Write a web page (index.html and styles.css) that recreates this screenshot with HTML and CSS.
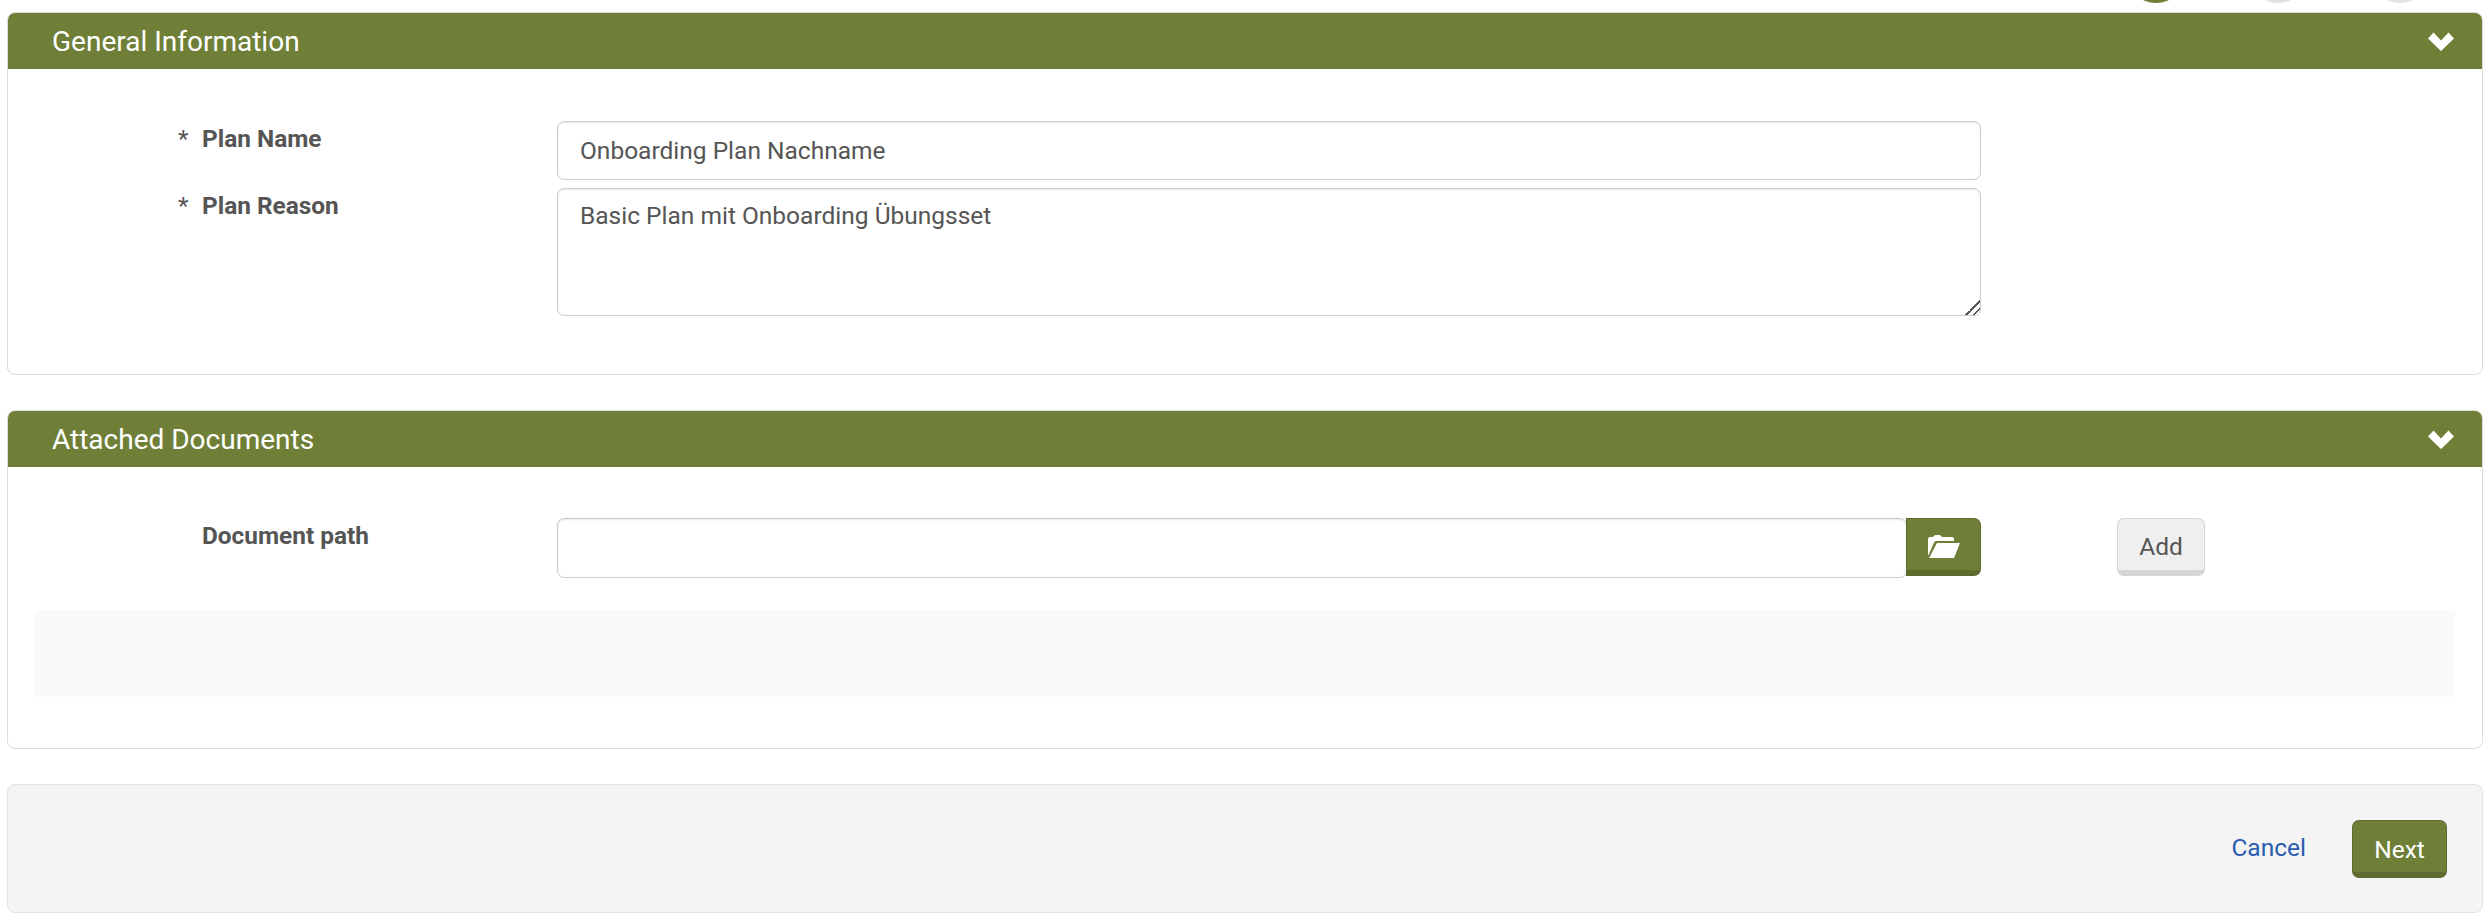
FILE: index.html
```html
<!DOCTYPE html>
<html lang="en">
<head>
  <meta charset="UTF-8" />
  <title>Onboarding Plan</title>
  <link rel="stylesheet" href="styles.css">
</head>
<body>
  <div class="steps">
    <span class="step step-active"></span>
    <span class="step"></span>
    <span class="step"></span>
  </div>

  <section class="panel panel-general">
    <header class="panel-head">
      <h2>General Information</h2>
      <svg class="chevron" viewBox="0 0 26 19"><path d="M0 6.500 L5.500 0.500 L13 8.500 L20.500 0.500 L26 6.500 L13 19 Z" /></svg>
    </header>
    <div class="panel-body">
      <div class="row row-name">
        <label class="row-label"><span class="req">*</span>Plan Name</label>
        <input class="field field-name" type="text" value="Onboarding Plan Nachname" />
      </div>
      <div class="row">
        <label class="row-label"><span class="req">*</span>Plan Reason</label>
        <textarea class="field field-area">Basic Plan mit Onboarding Übungsset</textarea>
      </div>
    </div>
  </section>

  <section class="panel panel-docs">
    <header class="panel-head">
      <h2>Attached Documents</h2>
      <svg class="chevron" viewBox="0 0 26 19"><path d="M0 6.500 L5.500 0.500 L13 8.500 L20.500 0.500 L26 6.500 L13 19 Z" /></svg>
    </header>
    <div class="panel-body">
      <div class="row">
        <label class="row-label"><span class="req"></span>Document path</label>
        <div class="file-group">
          <input class="field file-input" type="text" />
          <button class="btn btn-primary btn-browse" type="button">
            <svg class="folder" viewBox="0 0 32 23"><path d="M0 20 V4 Q0 2 2 2 H5 L7 0 H12 L14 2 H24 Q26 2 26 4 V6 H8 Q6.500 6 5.800 8 L0.500 20 Z" /><path d="M9 8 H32 L26 23 H1 Z" /></svg>
          </button>
        </div>
        <button class="btn btn-add" type="button">Add</button>
      </div>
      <div class="doc-list"></div>
    </div>
  </section>

  <footer class="actions">
    <a class="cancel" href="#">Cancel</a>
    <button class="btn btn-primary btn-next" type="button">Next</button>
  </footer>
</body>
</html>
```

FILE: styles.css
```css
* {
  box-sizing: border-box;
}
body {
  margin: 0;
  padding: 0 9px 0 7px;
  background-color: white;
  font-family: Roboto, sans-serif;
  font-size: 24.4px;
  color: #555555;
  height: 923px;
  overflow: hidden;
}
.steps {
  height: 12px;
  display: flex;
  justify-content: flex-end;
  gap: 62px;
  padding-right: 53px;
  overflow: hidden;
}
.step {
  flex: none;
  width: 60px;
  height: 60px;
  margin-top: -57px;
  border-radius: 50%;
  background-color: #e2e2e2;
}
.step-active {
  background-color: #6f7f37;
}
.panel {
  border: 1px solid #dcdcdc;
  border-radius: 8px;
  background-color: white;
}
.panel-general {
  height: 363px;
}
.panel-docs {
  height: 339px;
  margin-top: 35px;
}
.panel-head {
  height: 56px;
  background-color: #6f7f37;
  color: white;
  border-radius: 7px 7px 0 0;
  padding: 0 28px 0 44px;
  display: flex;
  align-items: center;
  justify-content: space-between;
}
.panel-head h2 {
  margin: 0;
  font-size: 28px;
  font-weight: 400;
}
.chevron {
  width: 26px;
  height: 19px;
  fill: white;
}
.panel-body {
  padding: 52px 27px 0 27px;
}
.panel-docs .panel-body {
  padding-top: 51px;
}
.row {
  display: flex;
  align-items: flex-start;
}
.row-name {
  margin-bottom: 8px;
}
.row-label {
  flex: none;
  width: 523px;
  padding-left: 143px;
  padding-top: 3px;
  font-weight: 700;
  display: flex;
}
.req {
  width: 24px;
  font-weight: 400;
}
.field {
  display: block;
  width: 1424px;
  height: 60px;
  margin-left: -1px;
  border: 1px solid #cccccc;
  border-radius: 7px;
  padding: 0 22px;
  font-family: Roboto, sans-serif;
  font-size: 24.5px;
  color: #555555;
  box-shadow: inset 0 1px 2px rgba(0,0,0,0.1);
  outline: none;
}
.field-name {
  height: 59px;
}
.field-area {
  height: 128px;
  padding-top: 12px;
}
.field-area::-webkit-resizer {
  background: linear-gradient(135deg, transparent 50%, #555555 50%, #555555 58%, transparent 58%, transparent 74%, #555555 74%, #555555 82%, transparent 82%);
}
.file-group {
  display: flex;
  width: 1424px;
  margin-left: -1px;
}
.file-input {
  width: 1350px;
  margin-left: 0;
  flex: none;
}
.btn {
  border-radius: 7px;
  font-family: Roboto, sans-serif;
  font-size: 24.5px;
}
.btn-primary {
  background-color: #6f7f37;
  color: white;
  border: 1px solid #5e6b2e;
  border-bottom: 6px solid #5e6b2e;
}
.btn-browse {
  flex: none;
  width: 75px;
  height: 58px;
  margin-left: -1px;
  border-radius: 0 7px 7px 0;
  padding: 0;
}
.folder {
  width: 32px;
  height: 23px;
  fill: white;
  display: block;
  margin: 4px auto 0;
}
.btn-add {
  flex: none;
  width: 88px;
  height: 58px;
  margin-left: 136px;
  padding: 3px 0 0;
  background-color: #efefef;
  border: 1px solid #d6d6d6;
  border-bottom: 6px solid #d6d6d6;
  color: #555555;
}
.doc-list {
  height: 87px;
  margin-top: 32px;
  background-color: #fafafa;
}
.actions {
  height: 129px;
  margin-top: 35px;
  border: 1px solid #e2e2e2;
  border-radius: 8px;
  background-color: #f4f4f4;
  display: flex;
  align-items: center;
  justify-content: flex-end;
  padding-right: 35px;
}
.cancel {
  color: #2a5db0;
  font-size: 24.5px;
  text-decoration: none;
  margin-right: 46px;
  margin-bottom: 2px;
}
.btn-next {
  width: 95px;
  height: 58px;
  padding: 6px 0 0;
}
```
